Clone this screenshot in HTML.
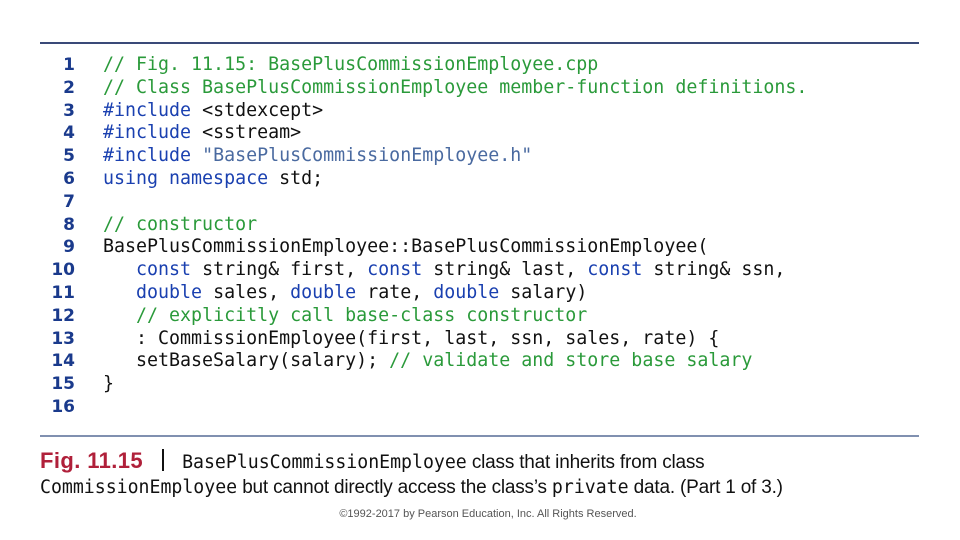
<!DOCTYPE html>
<html><head><meta charset="utf-8"><style>
body{margin:0;width:960px;height:540px;background:#fff;position:relative;overflow:hidden;font-family:"Liberation Sans",sans-serif}
.rule{position:absolute;left:40px;width:879px;height:2px}
.code{position:absolute;left:0;top:54px;font-family:"DejaVu Sans Mono",monospace;font-size:18.3px;line-height:22.8px;white-space:pre;color:#111}
.ln{display:inline-block;width:75px;text-align:right;font-family:"DejaVu Sans",sans-serif;font-weight:bold;color:#1a3a8c;font-size:17px;margin-right:28px}
.c{color:#2a9a3a}.k{color:#1a40b0}.s{color:#4a6aa0}
.cap{position:absolute;left:40px;font-size:19px;color:#111;white-space:nowrap;letter-spacing:-0.2px}
.m{font-family:"DejaVu Sans Mono",monospace;font-size:18.2px;letter-spacing:0}
</style></head><body>
<div class="rule" style="top:42px;background:#3a4a78"></div>
<div class="code"><span class="ln">1</span><span class="c">// Fig. 11.15: BasePlusCommissionEmployee.cpp</span>
<span class="ln">2</span><span class="c">// Class BasePlusCommissionEmployee member-function definitions.</span>
<span class="ln">3</span><span class="k">#include</span> &lt;stdexcept&gt;
<span class="ln">4</span><span class="k">#include</span> &lt;sstream&gt;
<span class="ln">5</span><span class="k">#include</span> <span class="s">"BasePlusCommissionEmployee.h"</span>
<span class="ln">6</span><span class="k">using namespace</span> std;
<span class="ln">7</span>
<span class="ln">8</span><span class="c">// constructor</span>
<span class="ln">9</span>BasePlusCommissionEmployee::BasePlusCommissionEmployee(
<span class="ln">10</span>   <span class="k">const</span> string&amp; first, <span class="k">const</span> string&amp; last, <span class="k">const</span> string&amp; ssn,
<span class="ln">11</span>   <span class="k">double</span> sales, <span class="k">double</span> rate, <span class="k">double</span> salary)
<span class="ln">12</span>   <span class="c">// explicitly call base-class constructor</span>
<span class="ln">13</span>   : CommissionEmployee(first, last, ssn, sales, rate) {
<span class="ln">14</span>   setBaseSalary(salary); <span class="c">// validate and store base salary</span>
<span class="ln">15</span>}
<span class="ln">16</span></div>
<div class="rule" style="top:435px;background:#8090b0"></div>
<div class="cap" style="top:448px"><span style="color:#b0203a;font-weight:bold;font-size:22px;letter-spacing:0.4px">Fig. 11.15</span><span style="display:inline-block;width:2px;height:22px;background:#111;margin:0 18px 0 19px;vertical-align:-3px"></span><span class="m">BasePlusCommissionEmployee</span> class that inherits from class</div>
<div class="cap" style="top:477px"><span class="m">CommissionEmployee</span> but cannot directly access the class’s <span class="m">private</span> data. (Part 1 of 3.)</div>
<div style="position:absolute;top:508px;left:0;width:976px;text-align:center;font-size:11px;color:#555">©1992-2017 by Pearson Education, Inc. All Rights Reserved.</div>
</body></html>
